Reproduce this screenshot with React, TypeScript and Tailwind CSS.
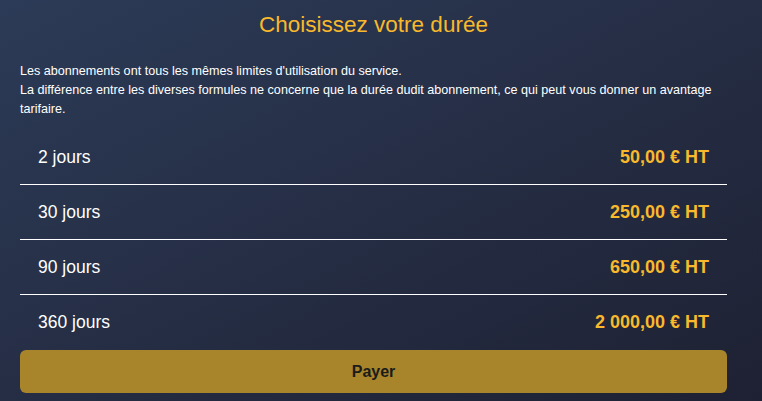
export default function App() {
  const plans = [
    { label: "2 jours", price: "50,00 € HT" },
    { label: "30 jours", price: "250,00 € HT" },
    { label: "90 jours", price: "650,00 € HT" },
    { label: "360 jours", price: "2 000,00 € HT" },
  ];
  return (
    <div
      className="h-[401px] w-full overflow-hidden bg-gradient-to-br from-[#2c3b57] to-[#1e2133] pl-5 pr-[35px] text-white"
      style={{ fontFamily: '"Liberation Sans", Arial, sans-serif' }}
    >
      <h1 className="pt-[9px] text-center text-[22.5px] leading-[32px] text-[#f8b92c]">Choisissez votre durée</h1>
      <p className="mt-[21px] text-[12.6px] leading-[19px]">
        Les abonnements ont tous les mêmes limites d'utilisation du service.
        <br />
        La différence entre les diverses formules ne concerne que la durée dudit abonnement, ce qui peut vous donner un avantage tarifaire.
      </p>
      <ul className="mt-[11px]">
        {plans.map((plan, i) => (
          <li
            key={plan.label}
            className={`flex h-[55px] items-center justify-between px-[18px] ${i < plans.length - 1 ? "border-b border-white" : ""}`}
          >
            <span className="text-[17.5px]">{plan.label}</span>
            <span className="text-[18px] font-bold text-[#f8b92c]">{plan.price}</span>
          </li>
        ))}
      </ul>
      <button type="button" className="flex h-[43px] w-full items-center justify-center rounded-md bg-[#a8852b] text-[16px] font-bold text-[#1b1b1b]">
        Payer
      </button>
    </div>
  );
}
